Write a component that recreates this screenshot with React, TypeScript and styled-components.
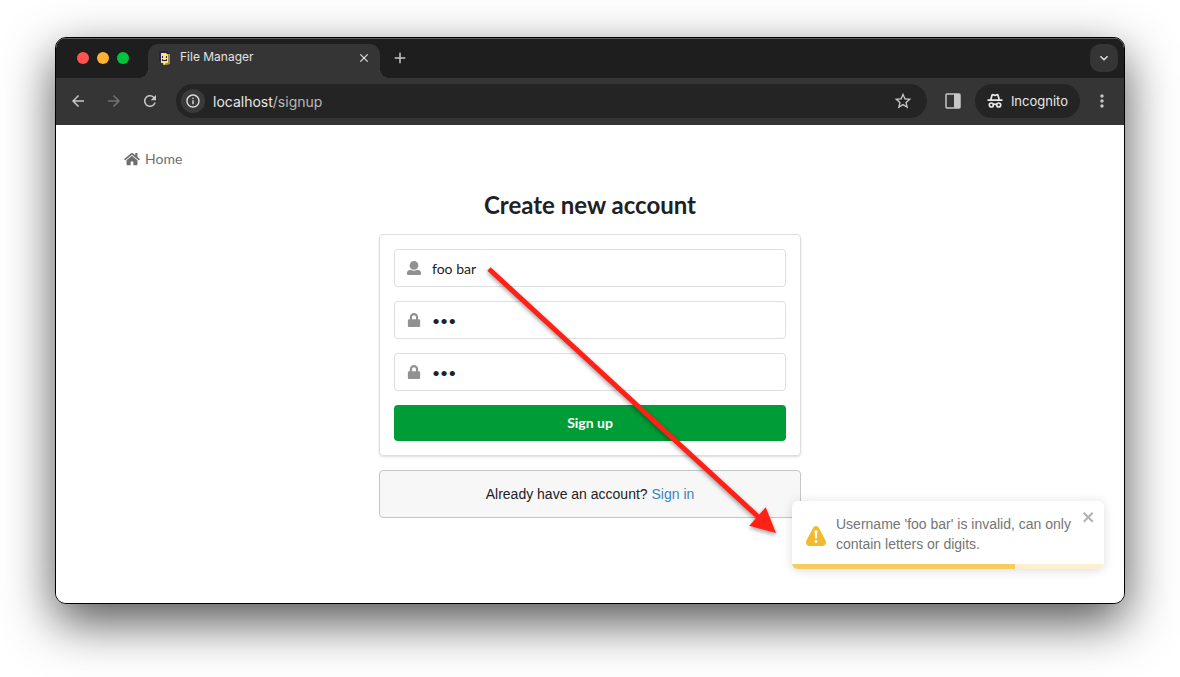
import React from "react";
import styled, { createGlobalStyle } from "styled-components";
import {
  MdAdd,
  MdArrowBack,
  MdArrowForward,
  MdClose,
  MdInfoOutline,
  MdKeyboardArrowDown,
  MdMoreVert,
  MdRefresh,
  MdStarBorder,
} from "react-icons/md";
import { FaLock } from "react-icons/fa";

const GlobalStyle = createGlobalStyle`
  *, *::before, *::after { box-sizing: border-box; }
  body { margin: 0; background: #fff; }
  button, input { font: inherit; color: inherit; }
`;

const Desktop = styled.div`
  display: flex;
  min-height: 100vh;
  padding: 37px 55px 73px;
  overflow: hidden;
`;

const BrowserWindow = styled.div`
  flex: 1;
  display: flex;
  flex-direction: column;
  min-width: 0;
  border: 1px solid #000;
  border-radius: 11px;
  background: #fff;
  box-shadow: 0 18px 50px rgba(0, 0, 0, 0.68);
  overflow: hidden;
`;

const TabStrip = styled.div`
  display: flex;
  align-items: center;
  height: 40px;
  padding: 0 6px 0 21px;
  background: #1e1e1e;
  box-shadow: inset 0 1px #5c5c5c;
  font-family: Inter, sans-serif;
  color: #e3e3e3;
`;

const TrafficLights = styled.div`
  display: flex;
  gap: 8px;
`;

const Light = styled.span<{ $color: string }>`
  width: 12px;
  height: 12px;
  border-radius: 50%;
  background: ${(p) => p.$color};
`;

const Tab = styled.div`
  position: relative;
  align-self: flex-end;
  display: flex;
  align-items: center;
  width: 232px;
  height: 34px;
  margin-left: 19px;
  padding: 0 6px 6px 9px;
  border-radius: 10px 10px 0 0;
  background: #353535;
  font-size: 12px;
  line-height: 16px;

  &::before,
  &::after {
    content: "";
    position: absolute;
    bottom: 0;
    width: 10px;
    height: 10px;
  }
  &::before {
    right: 100%;
    background: radial-gradient(circle at 0 0, transparent 10px, #353535 10px);
  }
  &::after {
    left: 100%;
    background: radial-gradient(circle at 100% 0, transparent 10px, #353535 10px);
  }
`;

const TabTitle = styled.span`
  flex: 1;
  margin-left: 7px;
  padding-bottom: 2px;
`;

const IconButton = styled.button<{ $color?: string }>`
  display: flex;
  align-items: center;
  justify-content: center;
  flex: none;
  width: 20px;
  height: 20px;
  padding: 0;
  border: 0;
  background: none;
  color: ${(p) => p.$color ?? "#c7c7c7"};
`;

const NewTabButton = styled(IconButton)`
  margin-left: 10px;
`;

const TabSearchButton = styled(IconButton)`
  width: 28px;
  height: 28px;
  margin-left: auto;
  border-radius: 10px;
  background: #353535;
  color: #e8e8e8;
`;

const Toolbar = styled.div`
  display: flex;
  align-items: center;
  gap: 16px;
  height: 47px;
  padding: 0 12px 1px;
  background: #353535;
  font-family: Inter, sans-serif;
`;

const AddressBar = styled.div`
  flex: 1;
  display: flex;
  align-items: center;
  min-width: 0;
  height: 34px;
  padding: 0 14px 0 5px;
  border-radius: 17px;
  background: #242424;
`;

const SiteInfoButton = styled(IconButton)`
  width: 24px;
  height: 24px;
  border-radius: 50%;
  background: #3a3a3a;
  color: #e3e3e3;
`;

const Url = styled.span`
  flex: 1;
  margin-left: 8px;
  font-size: 14px;
  color: #b8b8b8;
`;

const Host = styled.span`
  color: #e8e8e8;
`;

const ToolbarActions = styled.div`
  display: flex;
  align-items: center;
  gap: 12px;
`;

const IncognitoPill = styled.button`
  display: flex;
  align-items: center;
  gap: 8px;
  height: 34px;
  padding: 0 12px;
  border: 0;
  border-radius: 17px;
  background: #242424;
  color: #e8e8e8;
  font-size: 13px;
`;

const Page = styled.main`
  position: relative;
  flex: 1;
  padding: 24px 20px;
  background: #fff;
  color: #212121;
  font-family: Lato, sans-serif;
  font-size: 14px;
  line-height: 20px;
`;

const Nav = styled.nav`
  display: flex;
  max-width: 932px;
  margin: 0 auto;
`;

const HomeLink = styled.a`
  display: flex;
  align-items: center;
  gap: 5px;
  color: #6e6e6e;
  text-decoration: none;
`;

const SignupColumn = styled.section`
  max-width: 422px;
  margin: 20px auto 0;
`;

const Title = styled.h1`
  margin: 0 0 14px;
  font-size: 24px;
  line-height: 31px;
  font-weight: 700;
  text-align: center;
`;

const Form = styled.form`
  position: relative;
  display: flex;
  flex-direction: column;
  gap: 14px;
  padding: 14px;
  border: 1px solid #dededf;
  border-radius: 4px;
  box-shadow: 0 1px 2px rgba(34, 36, 38, 0.15);
`;

const Field = styled.label`
  display: flex;
  align-items: center;
  height: 38px;
  padding-left: 12px;
  border: 1px solid #dededf;
  border-radius: 4px;
  color: #919191;
`;

const FieldInput = styled.input`
  flex: 1;
  min-width: 0;
  height: 100%;
  margin-left: 11px;
  padding: 0;
  border: 0;
  outline: 0;
  background: none;
  color: #212121;
`;

const SubmitButton = styled.button`
  height: 36px;
  border: 0;
  border-radius: 4px;
  background: #009c37;
  color: #fff;
  font-weight: 700;
`;

const SignInMessage = styled.p`
  margin: 14px 0 0;
  padding: 13px;
  border: 1px solid #c4c5c6;
  border-radius: 4px;
  background: #f7f7f7;
  font-family: "Liberation Sans", Arial, sans-serif;
  text-align: center;
`;

const SignInLink = styled.a`
  color: #3a82c4;
  text-decoration: none;
`;

const Arrow = styled.svg`
  position: absolute;
  top: 30px;
  left: 105px;
  z-index: 1;
  overflow: visible;
  pointer-events: none;
  filter: drop-shadow(0 2px 2px rgba(0, 0, 0, 0.4));
`;

const Toast = styled.div`
  position: absolute;
  right: 20px;
  bottom: 34px;
  width: 312px;
  border-radius: 6px;
  background: #fff;
  box-shadow: 0 1px 10px rgba(0, 0, 0, 0.1), 0 2px 15px rgba(0, 0, 0, 0.05);
  color: #757575;
  font-family: "Liberation Sans", Arial, sans-serif;
  overflow: hidden;
`;

const ToastBody = styled.div`
  display: flex;
  align-items: flex-start;
  padding: 8px 8px 6px 14px;
`;

const ToastText = styled.p`
  flex: 1;
  margin: 5px 0 4px 10px;
`;

const ToastIcon = styled.svg`
  flex: none;
  align-self: center;
  margin-top: 4px;
`;

const ToastClose = styled.button`
  display: flex;
  padding: 0;
  border: 0;
  background: none;
  color: #b2b2b2;
`;

const ProgressTrack = styled.div`
  height: 5px;
  background: #fcf0d0;
`;

const ProgressBar = styled.div`
  height: 100%;
  background: #f5cb62;
`;

const Favicon = () => (
  <svg width="16" height="16" viewBox="0 0 16 16" aria-hidden="true">
    <path d="M2 1h8l3 3v9H4l-2-2z" fill="#25234c" />
    <path d="M6 4h7v10l-3 1H6z" fill="#a58f4c" />
    <path d="M4 3h5l2 2v8H9l-2 2-1-2H4z" fill="#ffe27a" />
    <path d="M5 6h1v2H5zM9 6h1v2H9zM5 9h1v1h3V9h1v2H5z" fill="#25234c" />
  </svg>
);

const SidePanelIcon = () => (
  <svg width="16" height="16" viewBox="0 0 16 16" aria-hidden="true">
    <rect x="1" y="1" width="14" height="14" rx="1" fill="none" stroke="currentColor" strokeWidth="1.5" />
    <path d="M9 1h6v14H9z" fill="currentColor" />
  </svg>
);

const IncognitoIcon = () => (
  <svg width="16" height="16" viewBox="0 0 16 16" fill="none" stroke="currentColor" strokeWidth="1.7" aria-hidden="true">
    <path d="M.5 7.2h15" />
    <path d="M3.7 7 5 2.2q.2-.7.9-.5L8 2.3l2.1-.6q.7-.2.9.5L12.3 7" />
    <circle cx="4.3" cy="12" r="2" />
    <circle cx="11.7" cy="12" r="2" />
    <path d="M6.4 11.6q1.6-1 3.2 0" />
  </svg>
);

const HomeIcon = () => (
  <svg width="16" height="14" viewBox="0 0 576 512" fill="currentColor" aria-hidden="true">
    <path d="M488 312.7V456c0 13.3-10.7 24-24 24H348c-6.6 0-12-5.4-12-12V356c0-6.6-5.4-12-12-12h-72c-6.6 0-12 5.4-12 12v112c0 6.6-5.4 12-12 12H112c-13.3 0-24-10.7-24-24V312.7c0-3.6 1.6-7 4.4-9.3l188-154.8c4.4-3.6 10.8-3.6 15.3 0l188 154.8c2.7 2.3 4.3 5.7 4.3 9.3zm83.6-60.9L488 182.9V44.4c0-6.6-5.4-12-12-12h-56c-6.6 0-12 5.4-12 12V117l-89.5-73.7c-17.7-14.6-43.3-14.6-61 0L4.4 251.8c-5.1 4.2-5.8 11.8-1.6 16.9l25.5 31c4.2 5.1 11.8 5.8 16.9 1.6l235.2-193.7c4.4-3.6 10.8-3.6 15.3 0l235.2 193.7c5.1 4.2 12.7 3.5 16.9-1.6l25.5-31c4.2-5.2 3.4-12.7-1.7-16.9z" />
  </svg>
);

const UserIcon = () => (
  <svg width="14" height="14" viewBox="0 0 512 512" fill="currentColor" aria-hidden="true">
    <path d="M256 0c88.366 0 160 71.634 160 160s-71.634 160-160 160S96 248.366 96 160 167.634 0 256 0zm183.283 333.821l-71.313-17.828c-74.923 53.89-165.738 41.864-223.94 0l-71.313 17.828C29.981 344.505 0 382.903 0 426.955V464c0 26.51 21.49 48 48 48h416c26.51 0 48-21.49 48-48v-37.045c0-44.052-29.981-82.45-72.717-93.134z" />
  </svg>
);

const fields = [
  { name: "username", label: "Username", type: "text", value: "foo bar", icon: <UserIcon /> },
  { name: "password", label: "Password", type: "password", value: "foo", icon: <FaLock size={14} /> },
  { name: "confirm", label: "Confirm password", type: "password", value: "foo", icon: <FaLock size={14} /> },
];

export default function App() {
  const remaining = 71.5;
  return (
    <>
      <GlobalStyle />
      <Desktop>
        <BrowserWindow>
          <TabStrip>
            <TrafficLights>
              <Light $color="#ff544d" />
              <Light $color="#ffb132" />
              <Light $color="#00c440" />
            </TrafficLights>
            <Tab>
              <Favicon />
              <TabTitle>File Manager</TabTitle>
              <IconButton aria-label="Close tab" $color="#e3e3e3">
                <MdClose size={14} />
              </IconButton>
            </Tab>
            <NewTabButton aria-label="New tab">
              <MdAdd size={18} />
            </NewTabButton>
            <TabSearchButton aria-label="Search tabs">
              <MdKeyboardArrowDown size={16} stroke="currentColor" />
            </TabSearchButton>
          </TabStrip>
          <Toolbar>
            <IconButton aria-label="Back">
              <MdArrowBack size={18} />
            </IconButton>
            <IconButton aria-label="Forward" $color="#727272">
              <MdArrowForward size={18} />
            </IconButton>
            <IconButton aria-label="Reload">
              <MdRefresh size={18} />
            </IconButton>
            <AddressBar>
              <SiteInfoButton aria-label="Site information">
                <MdInfoOutline size={16} />
              </SiteInfoButton>
              <Url>
                <Host>localhost</Host>/signup
              </Url>
              <IconButton aria-label="Bookmark">
                <MdStarBorder size={20} />
              </IconButton>
            </AddressBar>
            <ToolbarActions>
              <IconButton aria-label="Side panel">
                <SidePanelIcon />
              </IconButton>
              <IncognitoPill>
                <IncognitoIcon />
                Incognito
              </IncognitoPill>
              <IconButton aria-label="Menu">
                <MdMoreVert size={20} />
              </IconButton>
            </ToolbarActions>
          </Toolbar>
          <Page>
            <Nav>
              <HomeLink href="#home">
                <HomeIcon />
                Home
              </HomeLink>
            </Nav>
            <SignupColumn>
              <Title>Create new account</Title>
              <Form onSubmit={(e) => e.preventDefault()}>
                {fields.map((f) => (
                  <Field key={f.name}>
                    {f.icon}
                    <FieldInput
                      type={f.type}
                      name={f.name}
                      aria-label={f.label}
                      defaultValue={f.value}
                      autoComplete="off"
                    />
                  </Field>
                ))}
                <SubmitButton type="submit">Sign up</SubmitButton>
                <Arrow width="290" height="270" viewBox="485 265 290 270" aria-hidden="true">
                  <path d="M489 269 760 518.5" stroke="#ff2116" strokeWidth="5" />
                  <path d="M776 533 765.7 507.3 749.3 525.7z" fill="#ff2116" />
                </Arrow>
              </Form>
              <SignInMessage>
                Already have an account? <SignInLink href="#signin">Sign in</SignInLink>
              </SignInMessage>
            </SignupColumn>
            <Toast role="alert">
              <ToastBody>
                <ToastIcon width="20" height="20" viewBox="0 0 24 24" fill="#f1bb31" aria-hidden="true">
                  <path d="M23.32 17.191L15.438 2.184C14.728.833 13.416 0 11.996 0c-1.42 0-2.733.833-3.443 2.184L.533 17.448a4.744 4.744 0 000 4.368C1.243 23.167 2.555 24 3.975 24h16.05C22.22 24 24 22.044 24 19.632c0-.904-.251-1.746-.68-2.44zm-9.622 1.46c0 1.033-.724 1.823-1.698 1.823s-1.698-.79-1.698-1.822v-.043c0-1.028.724-1.822 1.698-1.822s1.698.79 1.698 1.822v.043zm.039-12.285l-.84 8.06c-.057.581-.408.943-.897.943-.49 0-.84-.367-.896-.942l-.84-8.065c-.057-.624.25-1.095.779-1.095h1.91c.528.005.84.476.784 1.1z" />
                </ToastIcon>
                <ToastText>Username 'foo bar' is invalid, can only contain letters or digits.</ToastText>
                <ToastClose aria-label="Close">
                  <svg width="14" height="16" viewBox="0 0 14 16" fill="currentColor" aria-hidden="true">
                    <path d="M7.71 8.23l3.75 3.75-1.48 1.48-3.75-3.75-3.75 3.75L1 11.98l3.75-3.75L1 4.48 2.48 3l3.75 3.75L9.98 3l1.48 1.48-3.75 3.75z" />
                  </svg>
                </ToastClose>
              </ToastBody>
              <ProgressTrack>
                <ProgressBar style={{ width: `${remaining}%` }} />
              </ProgressTrack>
            </Toast>
          </Page>
        </BrowserWindow>
      </Desktop>
    </>
  );
}
